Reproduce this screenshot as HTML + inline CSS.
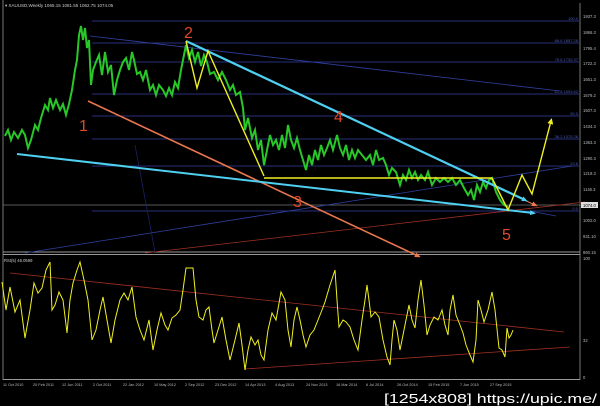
<!DOCTYPE html>
<html><head><style>
html,body{margin:0;padding:0;background:#000;width:600px;height:406px;overflow:hidden}
svg{display:block}
text{font-family:"Liberation Sans",sans-serif}
</style></head><body>
<svg width="600" height="406" viewBox="0 0 600 406" xmlns="http://www.w3.org/2000/svg">
<rect width="600" height="406" fill="#000"/>
<defs>
<marker id="ay" markerUnits="userSpaceOnUse" markerWidth="6" markerHeight="6" refX="3" refY="3" orient="auto"><path d="M0,0 L6,3 L0,6z" fill="#f0f020"/></marker>
<marker id="ac" markerUnits="userSpaceOnUse" markerWidth="6" markerHeight="6" refX="3" refY="3" orient="auto"><path d="M0,0.5 L6,3 L0,5.5z" fill="#4fd0f0"/></marker>
<marker id="ao" markerUnits="userSpaceOnUse" markerWidth="6" markerHeight="6" refX="3" refY="3" orient="auto"><path d="M0,0.5 L6,3 L0,5.5z" fill="#f07850"/></marker>
</defs>
<line x1="3" y1="0" x2="3" y2="380" stroke="#aaa" stroke-width="0.7"/>
<line x1="580" y1="3" x2="580" y2="380" stroke="#aaa" stroke-width="0.7"/>
<line x1="3" y1="252" x2="580" y2="252" stroke="#999" stroke-width="1"/>
<line x1="3" y1="254.5" x2="580" y2="254.5" stroke="#999" stroke-width="1"/>
<line x1="3" y1="379.5" x2="580" y2="379.5" stroke="#999" stroke-width="1"/>
<g stroke="#28307a" stroke-width="1">
<line x1="92" y1="21" x2="580" y2="21"/><line x1="92" y1="43" x2="580" y2="43"/>
<line x1="92" y1="62" x2="580" y2="62"/><line x1="92" y1="94" x2="580" y2="94"/>
<line x1="92" y1="116" x2="580" y2="116"/><line x1="92" y1="139" x2="580" y2="139"/>
<line x1="92" y1="166" x2="580" y2="166"/><line x1="92" y1="211" x2="580" y2="211"/>
</g>
<line x1="3" y1="205" x2="580" y2="205" stroke="#777" stroke-width="0.7"/>
<g font-size="4" fill="#4a58b0" text-anchor="end">
<text x="578" y="20">100.0</text><text x="578" y="42">88.6 1857.26</text><text x="578" y="61">78.6 1730.37</text>
<text x="578" y="93">61.8 1593.62</text><text x="578" y="115">50.0</text><text x="578" y="138">38.2 1375.26</text>
<text x="578" y="165">23.6</text><text x="578" y="210">0.0</text></g>
<line x1="90" y1="36" x2="560" y2="91" stroke="#3040a0" stroke-width="0.8"/>
<line x1="25" y1="253" x2="572" y2="166" stroke="#3040a0" stroke-width="0.8"/>
<line x1="135" y1="145" x2="155" y2="252" stroke="#1a2060" stroke-width="0.8"/>
<line x1="530" y1="211" x2="556" y2="216" stroke="#3040a0" stroke-width="0.8"/>
<line x1="145" y1="253" x2="585" y2="202" stroke="#a03020" stroke-width="0.8"/>
<polyline fill="none" stroke="#28c828" stroke-width="2" points="5,136 8,130 11,140 14,132 18,138 22,130 25,135 28,148 31,140 35,125 38,130 41,118 45,105 48,110 50,98 53,108 56,100 60,110 63,104 66,115 69,104 72,90 75,70 77,60 79,35 81,26 83,40 85,28 87,48 89,40 91,85 93,70 96,62 99,55 102,75 105,52 108,72 111,65 114,95 117,80 120,70 123,62 126,58 129,70 132,52 134,60 137,74 140,72 143,80 146,70 150,90 153,85 156,95 159,85 163,90 166,96 169,88 172,95 175,82 178,88 181,70 184,55 186,45 189,58 192,50 195,62 198,52 201,66 204,55 207,62 210,74 214,72 218,80 222,72 226,80 230,90 233,85 236,95 240,92 243,108 245,130 248,118 252,138 255,130 258,150 261,140 264,165 267,150 270,135 273,145 276,140 279,150 282,135 285,148 288,125 291,140 294,148 297,138 300,150 303,160 306,170 309,155 312,165 315,150 318,160 321,145 324,155 327,148 330,140 333,150 337,135 340,148 343,155 346,145 349,160 352,150 355,158 358,150 362,155 366,160 370,155 373,165 376,150 379,160 383,158 386,165 389,175 392,168 396,172 400,185 403,175 406,180 409,170 412,178 415,172 418,180 421,175 425,180 428,172 432,185 436,178 440,182 444,178 448,182 452,178 456,185 460,180 464,188 468,195 471,190 474,200 477,185 480,192 483,182 486,188 489,180 492,178 496,192 500,200 504,205 508,207"/>
<line x1="88" y1="101" x2="418" y2="256" stroke="#e8764e" stroke-width="1.6" marker-end="url(#ao)"/>
<line x1="186" y1="41" x2="535" y2="205" stroke="#e8764e" stroke-width="1" marker-end="url(#ao)"/>
<line x1="186" y1="41" x2="525" y2="200" stroke="#4fd0f0" stroke-width="2.2" marker-end="url(#ac)"/>
<line x1="17" y1="154" x2="533" y2="213" stroke="#4fd0f0" stroke-width="2" marker-end="url(#ac)"/>
<polyline fill="none" stroke="#f0f020" stroke-width="1.4" points="186,41 197,88 208,51 264,176"/>
<line x1="264" y1="178" x2="492" y2="178" stroke="#f0f020" stroke-width="1.6"/>
<polyline fill="none" stroke="#f0f020" stroke-width="1.4" points="492,178 508,210 522,175 532,194 551,121" marker-end="url(#ay)"/>
<g fill="#e04828" font-size="16"><text x="79" y="131">1</text><text x="184" y="38">2</text><text x="293" y="207">3</text><text x="334" y="122">4</text><text x="502" y="240">5</text></g>
<g font-size="4.2" fill="#bbb">
<text x="583" y="18">1937.3</text><text x="583" y="34">1866.3</text><text x="583" y="50">1795.4</text><text x="583" y="65">1722.3</text>
<text x="583" y="81">1651.3</text><text x="583" y="97">1579.2</text><text x="583" y="112">1507.3</text><text x="583" y="128">1434.3</text>
<text x="583" y="144">1363.3</text><text x="583" y="160">1290.3</text><text x="583" y="175">1219.3</text><text x="583" y="191">1146.3</text>
<text x="583" y="222">1002.0</text><text x="583" y="238">931.10</text><text x="583" y="254">860.15</text>
<text x="583" y="260">100</text><text x="583" y="342">32</text><text x="583" y="379">0</text></g>
<rect x="581" y="202" width="17" height="6" fill="#ddd"/><text x="583" y="207" font-size="4.2" fill="#000">1074.0</text>
<text x="5" y="7" font-size="4.5" fill="#ccc">▾ XAUUSD,Weekly  1065.15  1081.55  1062.75  1074.05</text>
<text x="4" y="262" font-size="4.2" fill="#ccc">RSI(5) 46.0599</text>
<line x1="10" y1="273" x2="564" y2="332" stroke="#a03020" stroke-width="0.8"/>
<line x1="245" y1="369" x2="570" y2="347" stroke="#a03020" stroke-width="0.8"/>
<polyline fill="none" stroke="#f0f020" stroke-width="1" points="2,282 6,310 10,287 15,312 20,300 25,338 30,310 34,283 38,293 42,288 46,270 50,262 52,310 55,305 59,292 63,300 67,333 70,300 73,283 77,270 80,262 84,280 88,300 92,340 96,330 100,310 103,297 107,320 111,343 115,320 120,300 124,293 128,300 132,287 136,317 140,330 144,340 149,320 153,350 157,330 161,313 165,325 168,330 172,318 176,315 180,310 183,290 186,268 190,268 193,268 196,300 199,317 203,320 206,310 209,307 212,330 214,343 218,330 222,317 226,340 230,360 235,340 239,323 242,345 245,370 248,350 251,337 255,345 258,340 261,355 264,360 268,330 272,313 276,320 281,292 285,300 288,330 291,347 294,320 297,307 300,320 303,335 306,347 310,335 314,330 318,320 322,310 325,302 330,285 335,270 337,300 339,327 343,320 346,322 350,327 354,340 358,350 362,320 365,300 367,285 369,300 371,317 375,312 379,317 383,340 387,357 390,365 392,340 394,320 397,330 400,350 403,335 406,320 409,305 412,320 415,328 418,300 421,280 424,305 427,335 430,325 434,317 438,320 442,310 445,325 448,335 450,310 453,295 456,315 460,325 463,333 466,345 470,355 473,362 476,340 478,300 481,310 484,322 488,310 492,292 495,310 499,348 502,350 505,357 507,328 509,338 511,335 513,330"/>
<g font-size="3.8" fill="#bbb">
<text x="3" y="386">11 Oct 2010</text><text x="33" y="386">20 Feb 2011</text><text x="62" y="386">12 Jun 2011</text>
<text x="93" y="386">2 Oct 2011</text><text x="123" y="386">22 Jan 2012</text><text x="154" y="386">10 May 2012</text>
<text x="185" y="386">2 Sep 2012</text><text x="215" y="386">23 Dec 2012</text><text x="245" y="386">14 Apr 2013</text>
<text x="275" y="386">4 Aug 2013</text><text x="306" y="386">24 Nov 2013</text><text x="336" y="386">16 Mar 2014</text>
<text x="366" y="386">6 Jul 2014</text><text x="397" y="386">26 Oct 2014</text><text x="428" y="386">15 Feb 2015</text>
<text x="460" y="386">7 Jun 2015</text><text x="490" y="386">27 Sep 2015</text></g>
<text x="384" y="403" font-size="13" fill="#fff" textLength="213" lengthAdjust="spacingAndGlyphs">[1254x808] https://upic.me/</text>
</svg>
</body></html>
